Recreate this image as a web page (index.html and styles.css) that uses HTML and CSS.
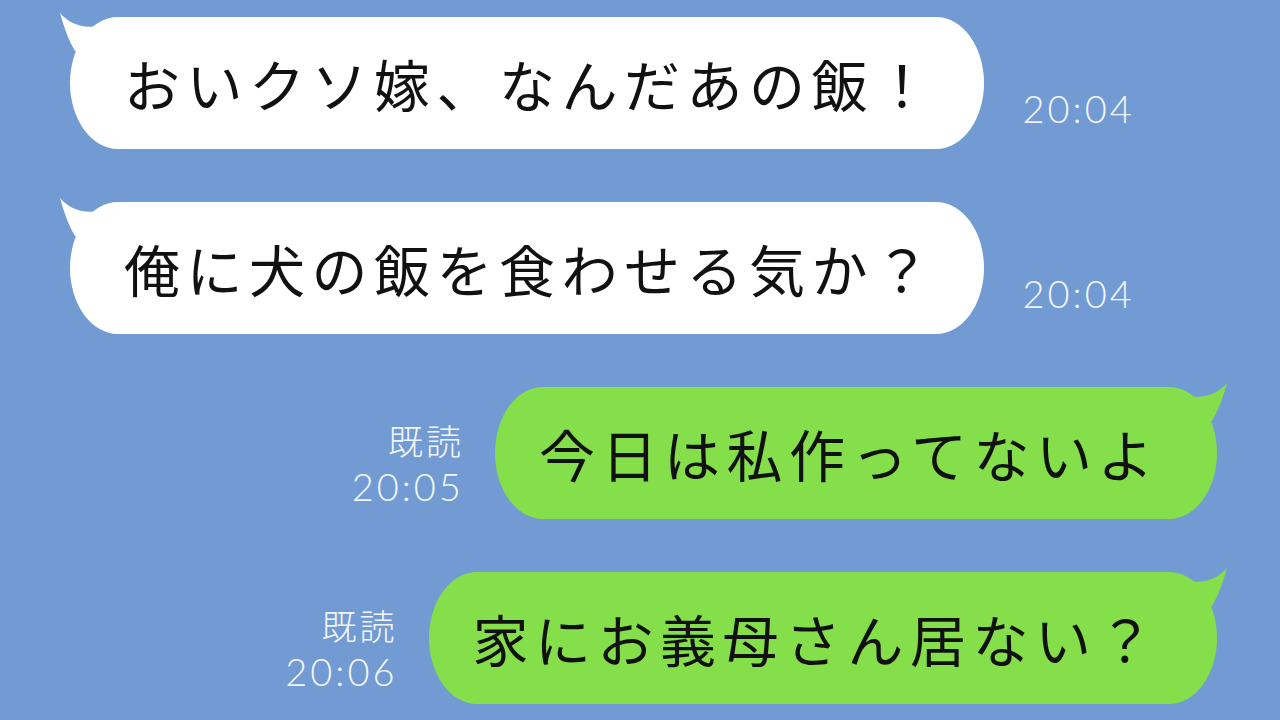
FILE: index.html
```html
<!DOCTYPE html>
<html lang="ja">
<head>
    <meta charset="UTF-8">
    <title>トーク</title>
    <link rel="stylesheet" href="styles.css">
</head>
<body>

    <div class="chat">
        <!-- 相手のメッセージ -->
        <div class="row left">
            <div class="bubble white">
                おいクソ嫁、なんだあの飯！
                <svg class="tail" viewBox="0 0 60 60"><path d="M4 4 C8 18 12 30 19 42 L54 42 L52 14 C32 22 14 16 4 4 Z"/></svg>
            </div>
            <div class="meta"><span class="time">20:04</span></div>
        </div>

        <div class="row left">
            <div class="bubble white">
                俺に犬の飯を食わせる気か？
                <svg class="tail" viewBox="0 0 60 60"><path d="M4 4 C8 18 12 30 19 42 L54 42 L52 14 C32 22 14 16 4 4 Z"/></svg>
            </div>
            <div class="meta"><span class="time">20:04</span></div>
        </div>

        <!-- 自分のメッセージ -->
        <div class="row right">
            <div class="meta"><span class="read">既読</span><span class="time">20:05</span></div>
            <div class="bubble green">
                今日は私作ってないよ
                <svg class="tail" viewBox="0 0 60 60"><path d="M4 4 C8 18 12 30 19 42 L54 42 L52 14 C32 22 14 16 4 4 Z"/></svg>
            </div>
        </div>

        <div class="row right">
            <div class="meta"><span class="read">既読</span><span class="time">20:06</span></div>
            <div class="bubble green">
                家にお義母さん居ない？
                <svg class="tail" viewBox="0 0 60 60"><path d="M4 4 C8 18 12 30 19 42 L54 42 L52 14 C32 22 14 16 4 4 Z"/></svg>
            </div>
        </div>
    </div>

</body>
</html>
```

FILE: styles.css
```css
body {
    margin: 0;
    background-color: #729bd3;
    font-family: "Noto Sans CJK JP", "Noto Sans", sans-serif;
    overflow: hidden;
}

.chat {
    display: flex;
    flex-direction: column;
    gap: 53px;
    padding-top: 17px;
}

.row {
    display: flex;
    align-items: flex-end;
}

.row.left {
    padding-left: 70px;
}

.row.right {
    justify-content: flex-end;
    padding-right: 63px;
}

.bubble {
    position: relative;
    font-size: 56px;
    line-height: 64px;
    letter-spacing: 6.5px;
    color: #111;
    padding: 34px 47px 34px 54px;
    border-radius: 48px / 66px;
    white-space: nowrap;
}

.bubble.white {
    background-color: #ffffff;
}

.bubble.green {
    background-color: #85df4b;
    padding: 34px 57px 34px 44px;
}

.tail {
    position: absolute;
    top: -8px;
    left: -14px;
    width: 60px;
    height: 60px;
}

.white .tail path {
    fill: #ffffff;
}

.green .tail {
    left: auto;
    right: -14px;
    transform: scaleX(-1);
}

.green .tail path {
    fill: #85df4b;
}

.meta {
    display: flex;
    flex-direction: column;
    align-items: flex-end;
    color: #f2f6fc;
}

.left .meta {
    margin-left: 39px;
    margin-bottom: 18px;
}

.right .meta {
    margin-right: 34px;
    margin-bottom: 10px;
}

.time {
    font-family: Lato, "Liberation Sans", sans-serif;
    font-weight: 300;
    font-size: 38px;
    line-height: 46px;
    letter-spacing: 3px;
    margin-right: -3px;
}

.read {
    font-size: 35px;
    line-height: 46px;
    font-weight: 300;
    letter-spacing: 3px;
    margin-right: -3px;
}
```
